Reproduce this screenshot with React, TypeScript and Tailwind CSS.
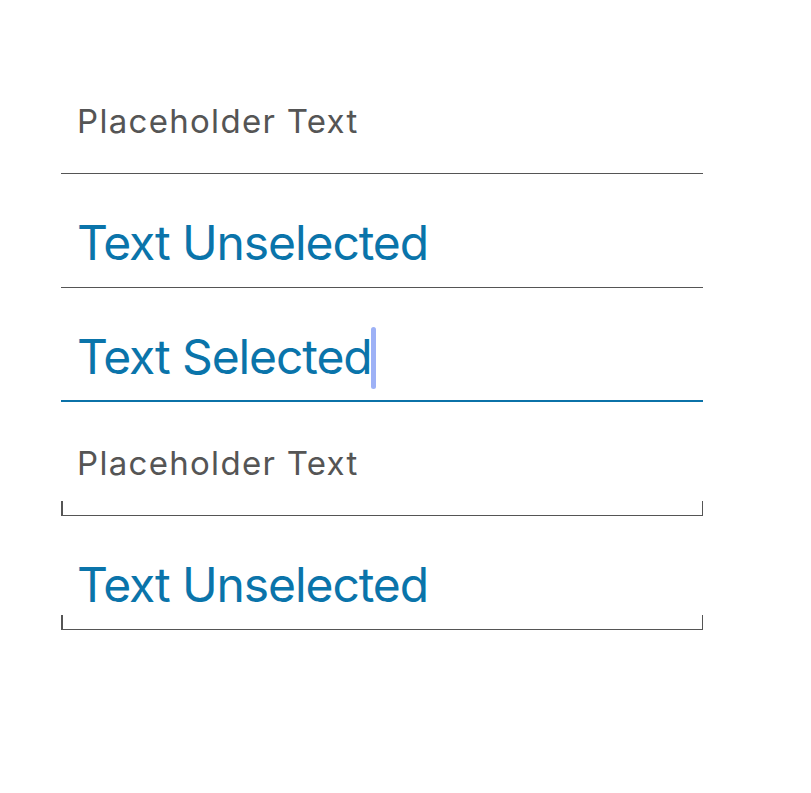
import React from "react";

const font = { fontFamily: "Inter, 'Noto Sans', sans-serif" };

function Ticks() {
  return (
    <>
      <div className="absolute left-0 bottom-0 w-[1.5px] h-[15px] bg-[#555555]" />
      <div className="absolute right-0 bottom-0 w-[1.5px] h-[15px] bg-[#555555]" />
    </>
  );
}

function Line({ active }: { active?: boolean }) {
  if (active) return <div className="h-[2px] bg-[#0b72a8]" />;
  return <div className="h-[1.5px] bg-[#555555]" />;
}

function Placeholder({ boxed }: { boxed?: boolean }) {
  return (
    <div className="relative h-[114px] flex flex-col justify-end">
      <span className="pl-4 pb-[35px] text-[33px] leading-none tracking-[1.3px] text-[#555555]">
        Placeholder Text
      </span>
      <Line />
      {boxed && <Ticks />}
    </div>
  );
}

function Filled({ boxed, selected, label }: { boxed?: boolean; selected?: boolean; label: string }) {
  return (
    <div className="relative h-[114px] flex flex-col justify-end">
      <div className={selected ? "pl-4 pb-[19.5px] flex items-end" : "pl-4 pb-[20px] flex items-end"}>
        <span className="text-[48px] leading-none tracking-[-1.1px] text-[#0a74aa]">{label}</span>
        {selected && (
          <span className="relative -ml-[1px] mb-[-8px] w-[5px] h-[62px] rounded-full bg-[#9db1f6]" />
        )}
      </div>
      <Line active={selected} />
      {boxed && <Ticks />}
    </div>
  );
}

export default function App() {
  return (
    <div className="min-h-screen bg-white" style={font}>
      <div className="ml-[61px] w-[642px] pt-[60px]">
        <Placeholder />
        <Filled label="Text Unselected" />
        <Filled label="Text Selected" selected />
        <Placeholder boxed />
        <Filled label="Text Unselected" boxed />
      </div>
    </div>
  );
}
